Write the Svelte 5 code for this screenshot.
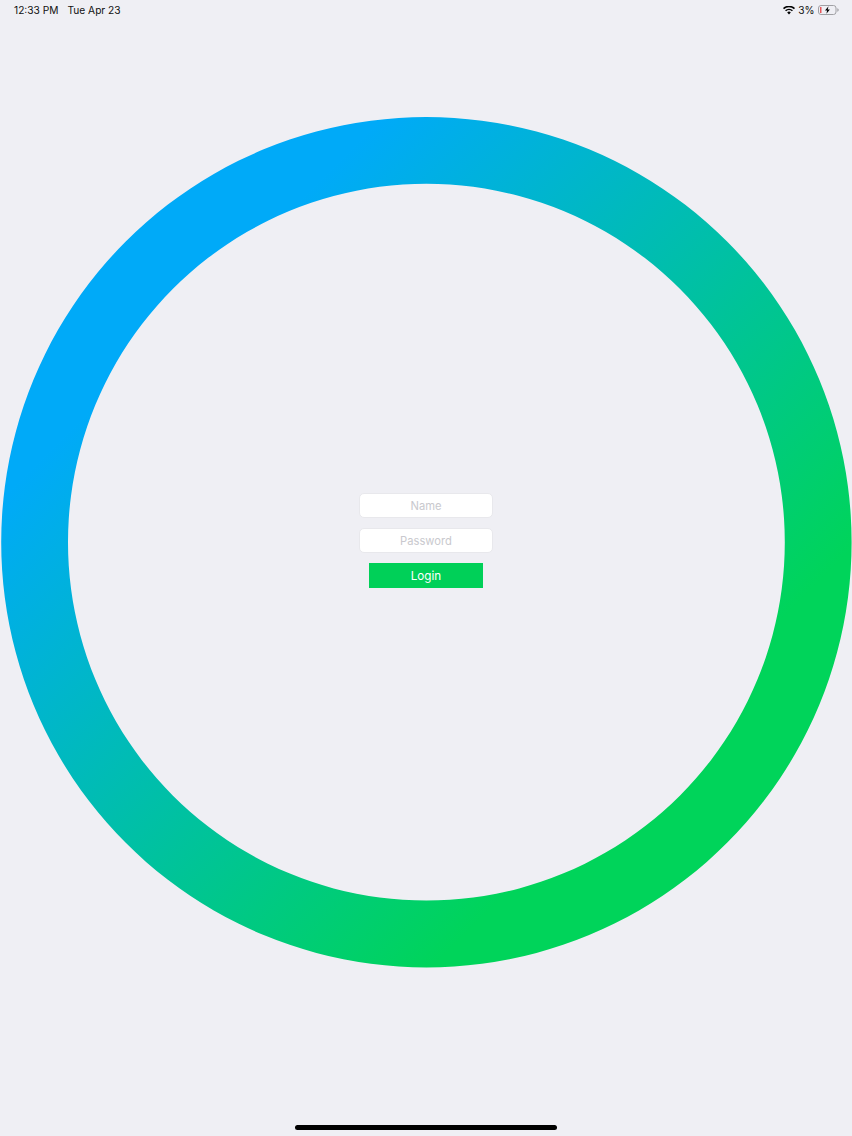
<script>
  const ringPath = 'M426.4 117a425.2 425.2 0 1 0 .01 0zM426.4 183.800a358.400 358.400 0 1 1 -.01 0z';
</script>

<div class="screen">
  <header class="status">
    <div class="left"><span>12:33 PM</span><span>Tue Apr 23</span></div>
    <div class="right">
      <svg class="wifi" viewBox="0 0 14 10" width="12" height="9">
        <path d="M7 9.6 4.9 7.3a3 3 0 0 1 4.2 0zM3.6 6 2.4 4.7a6.6 6.6 0 0 1 9.2 0L10.400 6a4.9 4.900 0 0 0-6.800 0zM1.200 3.500 0 2.200a10 10 0 0 1 14 0l-1.200 1.300a8.300 8.300 0 0 0-11.600 0z" fill="#000"/>
      </svg>
      <span class="pct">3%</span>
      <svg class="battery" viewBox="0 0 21 10" width="21" height="10">
        <rect x=".5" y=".5" width="17.500" height="9" rx="2.500" fill="none" stroke="#a0a0a4"/>
        <rect x="2" y="2" width="1.500" height="6" fill="#e8575a"/>
        <path d="M19.300 3.300c.9.300 1.400.8 1.400 1.700s-.5 1.400-1.400 1.700z" fill="#a0a0a4"/>
        <path d="M10.500 1.300 7 5.600h2.100L8.400 8.700 11.900 4.400H9.700z" fill="#000"/>
      </svg>
    </div>
  </header>

  <main class="stage">
    <svg class="ring" viewBox="0 0 852 1136" aria-hidden="true">
      <defs>
        <linearGradient id="g" gradientUnits="userSpaceOnUse" x1="225" y1="275" x2="675" y2="725">
          <stop offset="0" stop-color="#00aaf8"/>
          <stop offset="1" stop-color="#00d45a"/>
        </linearGradient>
      </defs>
      <path d={ringPath} fill="url(#g)" fill-rule="evenodd"/>
    </svg>

    <form class="login">
      <input placeholder="Name" />
      <input placeholder="Password" type="password" />
      <button type="button">Login</button>
    </form>
  </main>

  <div class="home"></div>
</div>

<style>
  :global(body) { margin: 0; background: #efeff4; }
  .screen {
    width: 852px;
    height: 1136px;
    display: grid;
    grid-template-rows: 20px 1fr 11.5px;
    font-family: Inter, "Liberation Sans", sans-serif;
    background: #efeff4;
    overflow: hidden;
  }
  .status {
    grid-row: 1;
    grid-column: 1;
    z-index: 1;
    display: flex;
    justify-content: space-between;
    align-items: center;
    padding: 0 13px 0 14px;
    font-size: 10.2px;
    color: #111;
  }
  .left { display: flex; gap: 9px; }
  .right { display: flex; align-items: center; gap: 3.5px; }
  .stage {
    grid-row: 1 / 4;
    grid-column: 1;
    display: grid;
  }
  .ring { grid-area: 1 / 1; width: 852px; height: 1136px; display: block; }
  .login {
    grid-area: 1 / 1;
    z-index: 1;
    justify-self: center;
    margin-top: 493px;
    width: 133.4px;
    display: flex;
    flex-direction: column;
    align-items: center;
    gap: 10px;
  }
  input {
    box-sizing: border-box;
    width: 133.4px;
    height: 25px;
    border: 1px solid #e8e8ec;
    border-radius: 5px;
    background: #fff;
    text-align: center;
    font: 11.2px Inter, "Liberation Sans", sans-serif;
    padding: 0;
    outline: none;
  }
  input::placeholder { color: #c9c9ce; opacity: 1; }
  button {
    width: 114.6px;
    height: 25px;
    border: 0;
    padding: 0;
    background: #00d058;
    color: #fff;
    font: 11.7px Inter, "Liberation Sans", sans-serif;
  }
  .home {
    grid-row: 3;
    grid-column: 1;
    z-index: 1;
    justify-self: center;
    width: 262px;
    height: 5px;
    border-radius: 3px;
    background: #000;
  }
</style>
